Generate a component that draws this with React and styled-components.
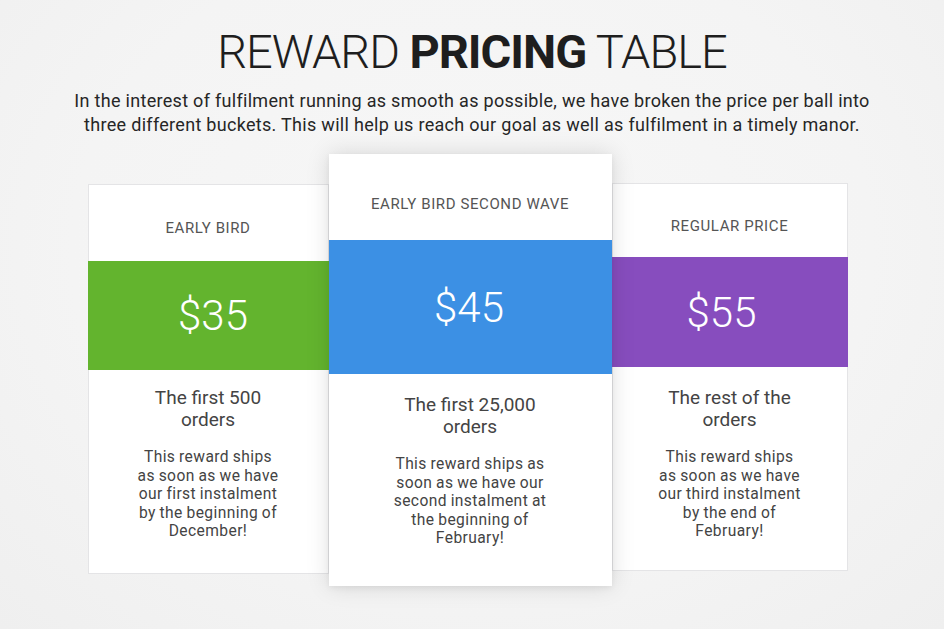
import React from "react";
import styled, { createGlobalStyle } from "styled-components";

const Global = createGlobalStyle`
  html, body { margin: 0; padding: 0; }
  body {
    width: 944px;
    height: 629px;
    overflow: hidden;
    font-family: Roboto, "Liberation Sans", sans-serif;
    background: radial-gradient(ellipse at 50% 40%, #f7f7f7 0%, #f4f4f4 60%, #efefef 100%);
  }
`;

const Page = styled.div`
  width: 944px;
  height: 629px;
  display: flex;
  flex-direction: column;
  align-items: center;
  padding-top: 24px;
  box-sizing: border-box;
`;

const Title = styled.h1`
  margin: 0;
  font-size: 47px;
  line-height: 56px;
  font-weight: 300;
  color: #1e1e1e;
  letter-spacing: -1px;
  strong { font-weight: 700; }
`;

const Subtitle = styled.p`
  margin: 9px 0 0;
  font-size: 18px;
  line-height: 24px;
  color: #262626;
  text-align: center;
  font-weight: 400;
  letter-spacing: 0.3px;
`;

const Row = styled.div`
  display: flex;
  align-items: flex-start;
  margin-top: 17px;
  margin-left: -9px;
`;

const Card = styled.div`
  width: ${(p) => p.$w}px;
  margin-top: ${(p) => p.$offset}px;
  background: #fff;
  box-sizing: border-box;
  display: flex;
  flex-direction: column;
  position: relative;
  z-index: ${(p) => (p.$featured ? 2 : 1)};
  border: ${(p) => (p.$featured ? "none" : "1px solid #e4e4e6")};
  box-shadow: ${(p) =>
    p.$featured ? "0 0 22px rgba(0,0,0,0.13), 0 2px 6px rgba(0,0,0,0.06)" : "none"};
`;

const Header = styled.div`
  height: ${(p) => p.$h}px;
  display: flex;
  align-items: flex-end;
  justify-content: center;
  padding-bottom: ${(p) => p.$pb}px;
  box-sizing: border-box;
  font-size: 15px;
  color: #555;
  text-transform: uppercase;
  letter-spacing: 0.6px;
`;

const Band = styled.div`
  height: ${(p) => p.$h}px;
  background: ${(p) => p.$color};
  display: flex;
  align-items: center;
  justify-content: center;
  box-sizing: border-box;
  padding-left: ${(p) => Math.max(p.$shift, 0)}px;
  padding-right: ${(p) => Math.max(-p.$shift, 0)}px;
  color: #fff;
  font-size: 42px;
  font-weight: 300;
  margin: 0 ${(p) => (p.$bleed ? -1 : 0)}px;
`;

const Body = styled.div`
  height: ${(p) => p.$h}px;
  display: flex;
  flex-direction: column;
  align-items: center;
  padding-top: ${(p) => p.$pt}px;
  box-sizing: border-box;
  text-align: center;
`;

const PlanTitle = styled.div`
  max-width: 150px;
  font-size: 19px;
  line-height: 22px;
  color: #444;
`;

const PlanText = styled.div`
  margin-top: 17px;
  font-size: 15.6px;
  line-height: 18.6px;
  letter-spacing: 0.4px;
  word-spacing: -0.5px;
  white-space: nowrap;
  color: #444;
`;

const plans = [
  {
    name: "Early Bird",
    price: "$35",
    color: "#63b42e",
    w: 241,
    offset: 30,
    headerH: 76,
    headerPb: 24,
    bandH: 109,
    bodyH: 203,
    bodyPt: 17,
    shift: 10,
    title: "The first 500 orders",
    lines: ["This reward ships", "as soon as we have", "our first instalment", "by the beginning of", "December!"],
  },
  {
    name: "Early Bird Second Wave",
    price: "$45",
    color: "#3c90e4",
    w: 283,
    offset: 0,
    featured: true,
    headerH: 86,
    headerPb: 27,
    bandH: 134,
    bodyH: 212,
    bodyPt: 20,
    shift: -2,
    title: "The first 25,000 orders",
    lines: ["This reward ships as", "soon as we have our", "second instalment at", "the beginning of", "February!"],
  },
  {
    name: "Regular Price",
    price: "$55",
    color: "#874dbe",
    w: 236,
    offset: 29,
    headerH: 73,
    headerPb: 22,
    bandH: 110,
    bodyH: 203,
    bodyPt: 20,
    shift: -16,
    title: "The rest of the orders",
    lines: ["This reward ships", "as soon as we have", "our third instalment", "by the end of", "February!"],
  },
];

export default function App() {
  return (
    <>
      <Global />
      <Page>
        <Title>
          REWARD <strong>PRICING</strong> TABLE
        </Title>
        <Subtitle>
          In the interest of fulfilment running as smooth as possible, we have broken the price per ball into
          <br />
          three different buckets. This will help us reach our goal as well as fulfilment in a timely manor.
        </Subtitle>
        <Row>
          {plans.map((p) => (
            <Card key={p.name} $w={p.w} $offset={p.offset} $featured={p.featured}>
              <Header $h={p.headerH} $pb={p.headerPb}>{p.name}</Header>
              <Band $h={p.bandH} $color={p.color} $bleed={!p.featured} $shift={p.shift}>
                {p.price}
              </Band>
              <Body $h={p.bodyH} $pt={p.bodyPt}>
                <PlanTitle>{p.title}</PlanTitle>
                <PlanText>
                  {p.lines.map((l, i) => (
                    <React.Fragment key={i}>
                      {i > 0 && <br />}
                      {l}
                    </React.Fragment>
                  ))}
                </PlanText>
              </Body>
            </Card>
          ))}
        </Row>
      </Page>
    </>
  );
}
